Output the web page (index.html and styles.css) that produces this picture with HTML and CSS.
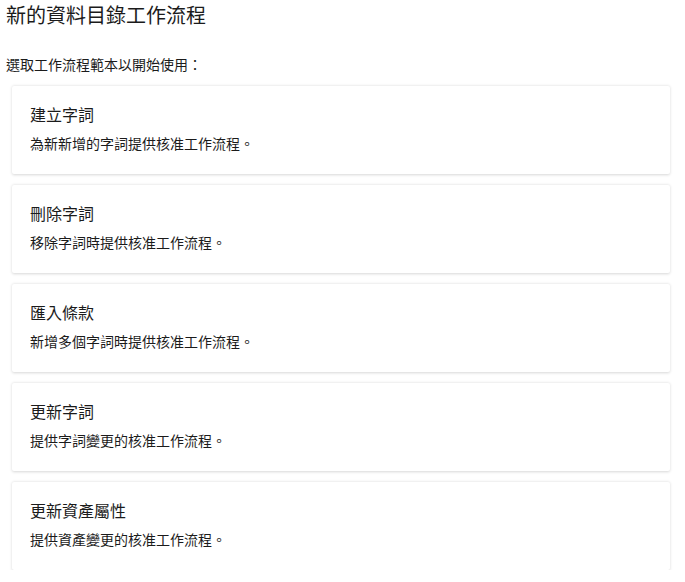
FILE: index.html
```html
<!DOCTYPE html>
<html lang="zh-Hant">
<head>
<meta charset="utf-8">
<link rel="stylesheet" href="styles.css">
</head>
<body>
<div class="page">
  <h1 class="title">新的資料目錄工作流程</h1>
  <p class="subtitle">選取工作流程範本以開始使用：</p>
  <div class="list">
    <div class="card"><div class="card-title">建立字詞</div><div class="card-desc">為新新增的字詞提供核准工作流程。</div></div>
    <div class="card"><div class="card-title">刪除字詞</div><div class="card-desc">移除字詞時提供核准工作流程。</div></div>
    <div class="card"><div class="card-title">匯入條款</div><div class="card-desc">新增多個字詞時提供核准工作流程。</div></div>
    <div class="card"><div class="card-title">更新字詞</div><div class="card-desc">提供字詞變更的核准工作流程。</div></div>
    <div class="card"><div class="card-title">更新資產屬性</div><div class="card-desc">提供資產變更的核准工作流程。</div></div>
  </div>
</div>
</body>
</html>
```
FILE: styles.css
```css
html, body { margin: 0; padding: 0; background: #fff; }
body { font-family: "Noto Sans CJK TC", "Noto Sans", sans-serif; color: #1b1b1b; }
.page { padding: 0 15px 0 6px; }
.title { margin: 0; font-size: 20px; font-weight: 400; line-height: 29px; }
.subtitle { margin: 25px 0 0; font-size: 14px; line-height: 20px; }
.list { display: flex; flex-direction: column; gap: 11px; margin-top: 12px; padding-left: 6px; }
.card { height: 88px; box-sizing: border-box; padding: 17px 18px; background: #fff; border-radius: 2px; box-shadow: 0 0.5px 3px rgba(0,0,0,0.16); }
.card-title { font-size: 16px; line-height: 22px; }
.card-desc { margin-top: 8px; font-size: 14px; line-height: 20px; }
```
